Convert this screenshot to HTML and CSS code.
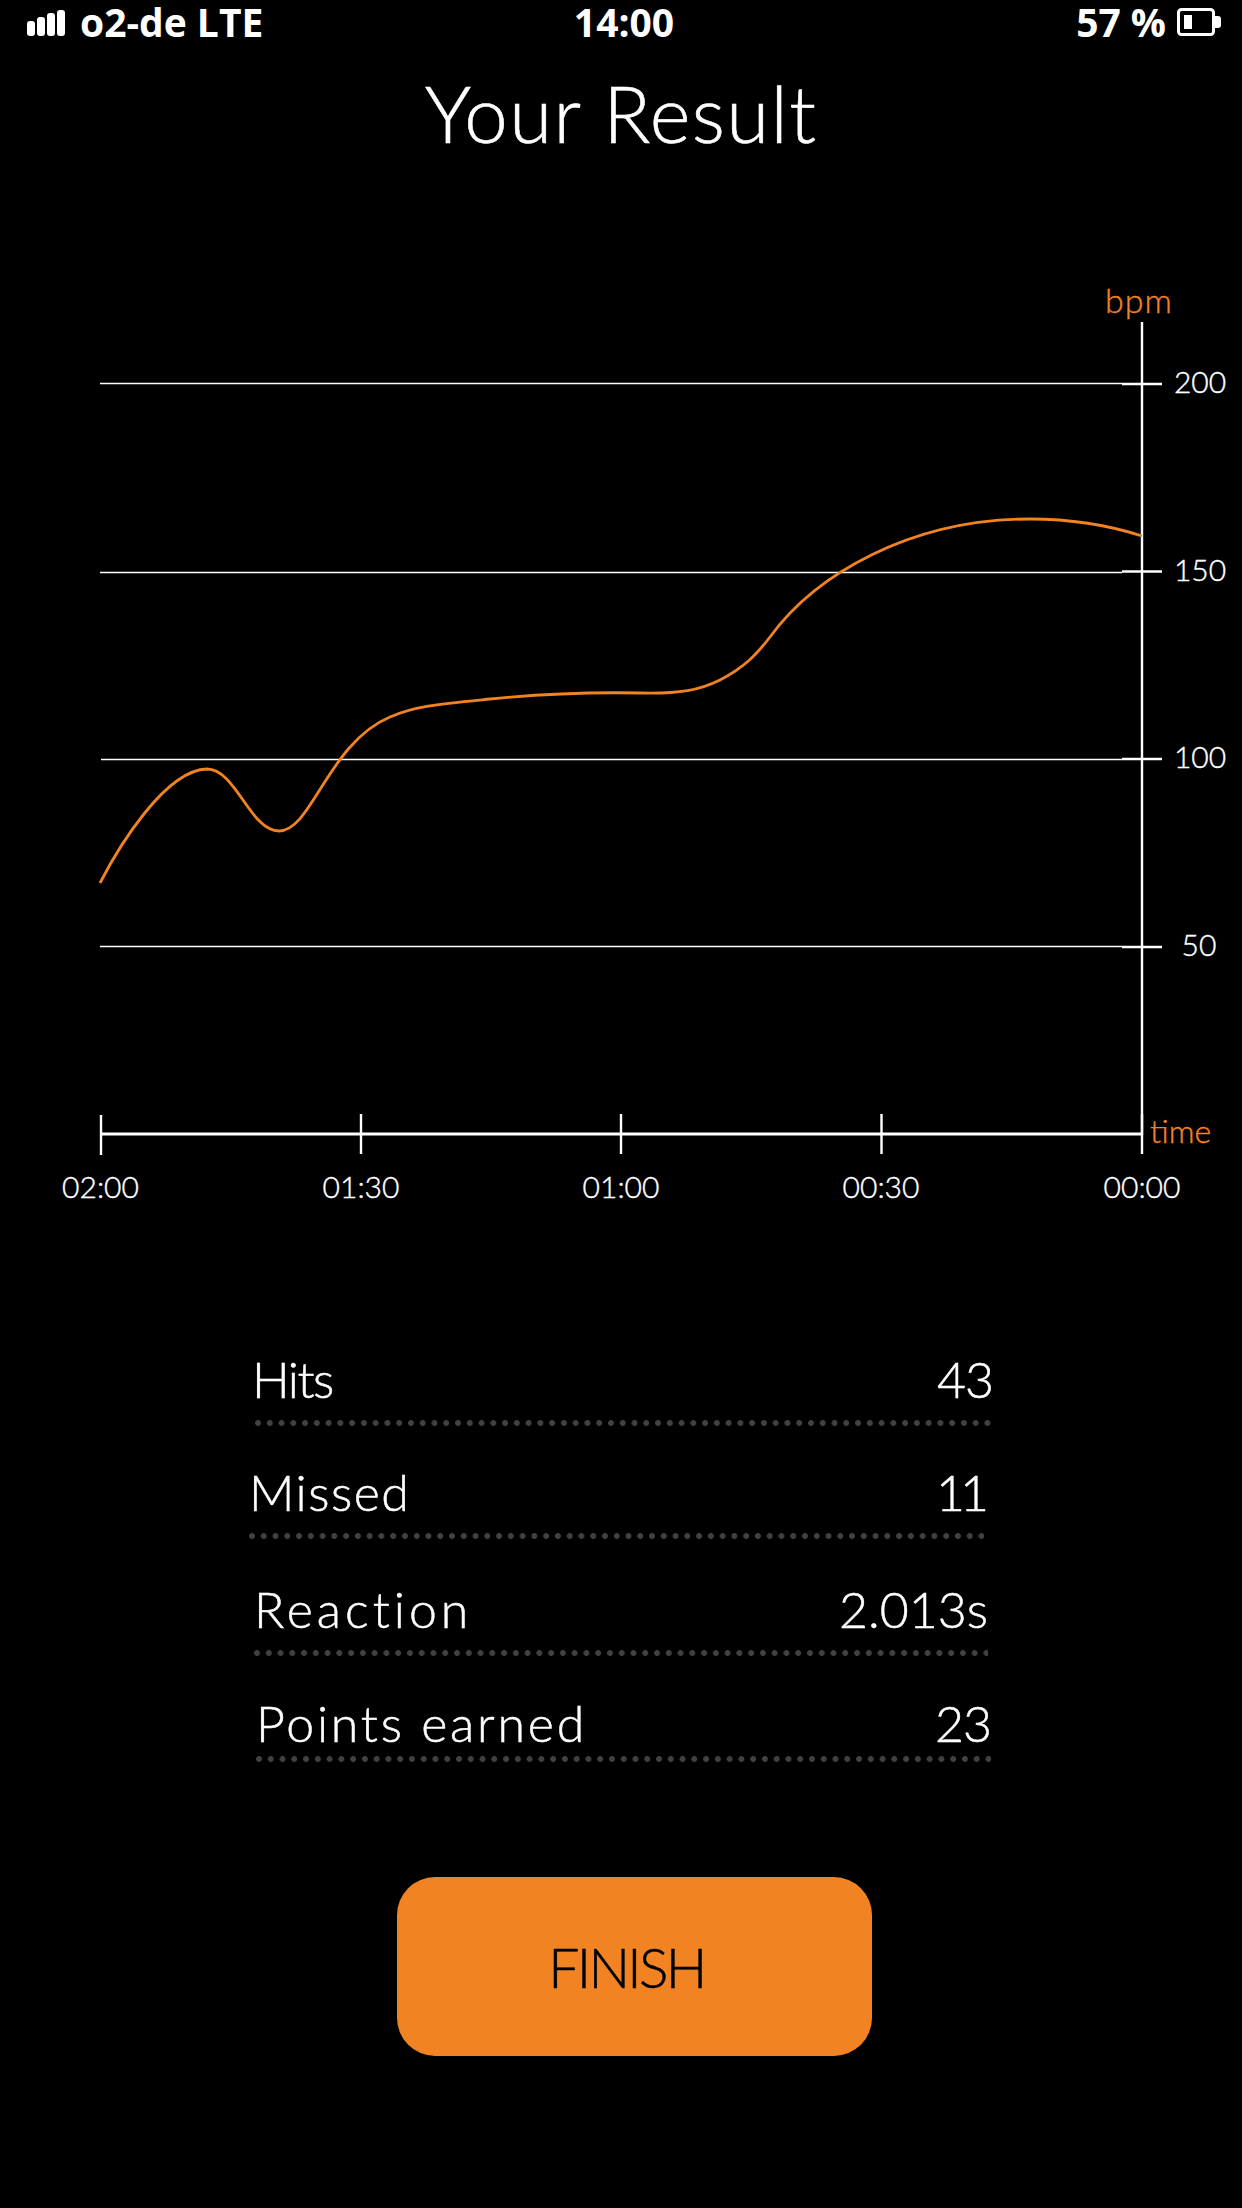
FILE: index.html
```html
<!DOCTYPE html>
<html lang="en">
<head>
<meta charset="utf-8">
<title>Your Result</title>
<link rel="stylesheet" href="styles.css">
</head>
<body>
<div class="screen">
  <header class="status">
    <div class="status-left">
      <div class="signal"><i class="b1"></i><i class="b2"></i><i class="b3"></i><i class="b4"></i></div>
      <span>o2-de LTE</span>
    </div>
    <div class="status-time">14:00</div>
    <div class="status-right">
      <span>57 %</span>
      <svg class="battery" width="44" height="28" viewBox="0 0 44 28"><rect x="1.5" y="1.5" width="35" height="25" rx="3" class="bat-shell"/><rect x="7" y="7" width="8" height="14" class="bat-fill"/><path d="M38 8h3a3 3 0 0 1 3 3v6a3 3 0 0 1-3 3h-3z" class="bat-fill"/></svg>
    </div>
  </header>
  <h1 class="title">Your Result</h1>
  <svg class="chart" width="1242" height="1010" viewBox="0 190 1242 1010">
    <g class="grid">
      <line x1="100" x2="1122" y1="383.5" y2="383.5"/>
      <line x1="100" x2="1122" y1="572.5" y2="572.5"/>
      <line x1="101" x2="1122" y1="759.5" y2="759.5"/>
      <line x1="100" x2="1122" y1="946.5" y2="946.5"/>
    </g>
    <g class="axis">
      <line x1="1142" x2="1142" y1="322" y2="1135"/>
      <line x1="100" x2="1142" y1="1134" y2="1134" class="x-axis"/>
      <line x1="1122" x2="1162" y1="384" y2="384"/>
      <line x1="1122" x2="1162" y1="571.5" y2="571.5"/>
      <line x1="1122" x2="1162" y1="759" y2="759"/>
      <line x1="1122" x2="1162" y1="947" y2="947"/>
      <line x1="101" x2="101" y1="1115" y2="1155"/>
      <line x1="361" x2="361" y1="1114" y2="1154"/>
      <line x1="621" x2="621" y1="1114" y2="1154"/>
      <line x1="881.5" x2="881.5" y1="1114" y2="1154"/>
      <line x1="1142" x2="1142" y1="1114" y2="1154"/>
    </g>
    <path class="curve" d="M100 883C118 848 165 770 207 769C236 769 250 831 279 831C312 831 328 743 390 717C415 706 440 704 490 699C530 695 590 692 640 693C680 694 700 690 720 680C745 667 757 654 770 637C815 575 910 519 1030 519C1070 519 1105 524 1142 536"/>
    <text class="unit unit-bpm" x="1139" y="313" text-anchor="middle">bpm</text>
    <text class="unit" x="1150" y="1143">time</text>
    <g class="ylabels" text-anchor="middle">
      <text x="1200" y="393">200</text>
      <text x="1200" y="581">150</text>
      <text x="1200" y="768">100</text>
      <text x="1199" y="956">50</text>
    </g>
    <g class="xlabels" text-anchor="middle">
      <text x="100.5" y="1198">02:00</text>
      <text x="361" y="1198">01:30</text>
      <text x="621" y="1198">01:00</text>
      <text x="881" y="1198">00:30</text>
      <text x="1142" y="1198">00:00</text>
    </g>
  </svg>
  <section class="stats">
    <div class="row row-hits"><div class="row-text"><span class="lbl">Hits</span><span class="val">43</span></div><div class="dots"></div></div>
    <div class="row row-missed"><div class="row-text"><span class="lbl">Missed</span><span class="val">11</span></div><div class="dots"></div></div>
    <div class="row row-reaction"><div class="row-text"><span class="lbl">Reaction</span><span class="val">2.013s</span></div><div class="dots"></div></div>
    <div class="row row-points"><div class="row-text"><span class="lbl">Points earned</span><span class="val">23</span></div><div class="dots"></div></div>
  </section>
  <div class="action"><button class="finish">FINISH</button></div>
</div>
</body>
</html>
```
FILE: styles.css
```css
* { box-sizing: border-box; }
html, body { margin: 0; padding: 0; background: #000; }
.screen { width: 1242px; height: 2208px; background: #000; color: #fff; font-family: Lato, "Open Sans", sans-serif; font-weight: 300; }
.status { height: 44px; padding: 0 21px 0 27px; display: grid; grid-template-columns: 1fr auto 1fr; align-items: center; font-family: "Open Sans", sans-serif; font-weight: 700; font-size: 39px; line-height: 44px; }
.status-left { display: flex; align-items: center; gap: 15px; }
.status-right { display: flex; align-items: center; justify-content: flex-end; gap: 11px; }
.signal { display: flex; align-items: flex-end; gap: 2px; height: 26px; margin-top: 1px; }
.signal i { display: block; width: 8px; background: #fff; border-radius: 3px; }
.b1 { height: 15px; } .b2 { height: 19px; } .b3 { height: 23px; } .b4 { height: 26px; }
.battery { display: block; }
.bat-shell { fill: none; stroke: #fff; stroke-width: 3; }
.bat-fill { fill: #fff; }
.title { margin: 21px 0 0; text-align: center; font-size: 78px; line-height: 96px; font-weight: 300; height: 96px; letter-spacing: 1.4px; -webkit-text-stroke: 0.6px #fff; }
.chart { display: block; margin-top: 29px; }
.grid line { stroke: #fff; stroke-width: 1.4; }
.axis line { stroke: #fff; stroke-width: 2.4; }
.axis .x-axis { stroke-width: 3; }
.curve { fill: none; stroke: #f28322; stroke-width: 2.8; }
.unit { fill: #f28322; font-size: 32px; font-weight: 300; stroke: #f28322; stroke-width: 0.4; }
.unit-bpm { font-size: 34px; letter-spacing: 1px; }
.ylabels text, .xlabels text { fill: #fff; font-size: 30px; font-weight: 300; stroke: #fff; stroke-width: 0.4; }
.stats { display: flex; flex-direction: column; margin-top: 149px; }
.row { font-size: 50px; line-height: 60px; -webkit-text-stroke: 0.5px #fff; }
.row-text { display: flex; justify-content: space-between; }
.dots { height: 6px; margin-top: 11px; background-image: radial-gradient(circle at 3px 3px, #3f4143 2.6px, transparent 3.2px); background-size: 11.77px 6px; background-repeat: repeat-x; }
.row-hits { margin-left: 252px; width: 741px; }
.row-hits .dots { margin-left: 3px; }
.row-hits .lbl { letter-spacing: -1.5px; }
.row-hits .val { letter-spacing: -1px; }
.row-missed { margin-left: 249px; margin-top: 36px; width: 735px; }
.row-missed .lbl { letter-spacing: 1.5px; }
.row-missed .val { letter-spacing: -5px; }
.row-reaction { margin-left: 254px; margin-top: 40px; width: 734px; }
.row-reaction .lbl { letter-spacing: 4px; }
.row-points { margin-left: 256px; margin-top: 37px; width: 735px; }
.row-points .dots { margin-top: 3px; }
.row-points .lbl { letter-spacing: 2.8px; }
.row-points .val { letter-spacing: -1px; }
.action { display: flex; margin-top: 115px; padding-left: 397px; }
.finish { width: 475px; height: 179px; border: 0; border-radius: 38px; background: #f28322; color: #000; font-family: inherit; font-weight: 300; font-size: 55px; letter-spacing: -2.6px; padding: 0 16px 0 0; -webkit-text-stroke: 0.5px #000; }
```
